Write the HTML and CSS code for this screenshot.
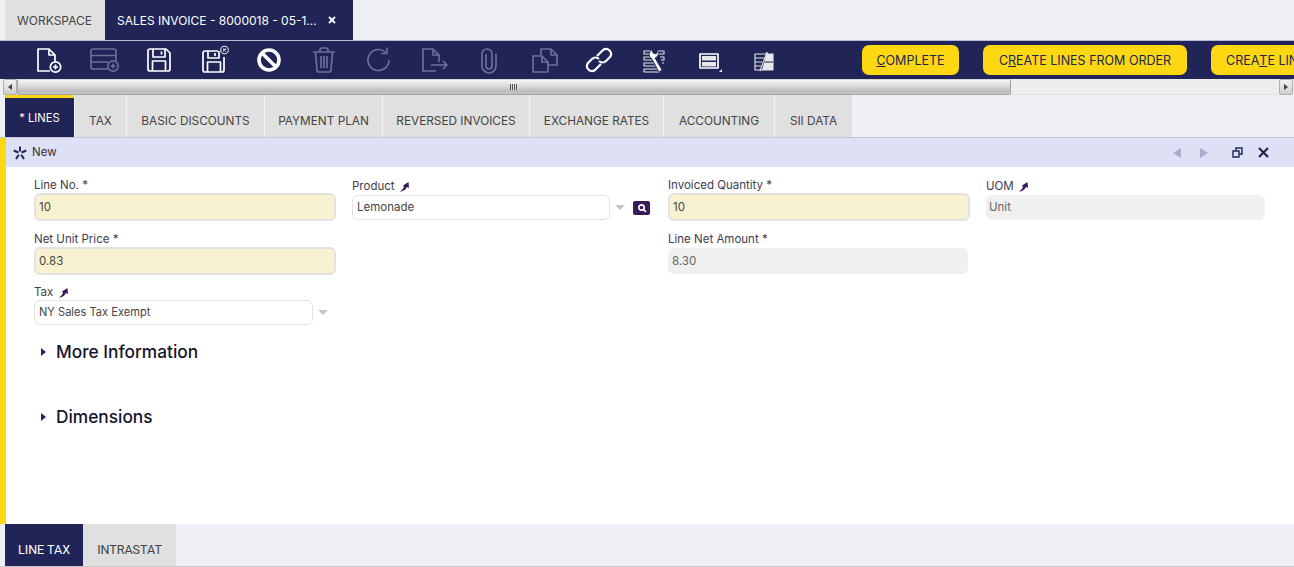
FILE: index.html
```html
<!DOCTYPE html>
<html>
<head>
    <title>Sales Invoice</title>
    <meta name="viewport" content="width=device-width, initial-scale=1.0">
    <link rel="stylesheet" href="styles.css">
</head>
<body>
    <!-- Window tabs -->
    <div class="window-tabs">
        <div class="window-tab">WORKSPACE</div>
        <div class="window-tab active">
            <span>SALES INVOICE - 8000018 - 05-1...</span>
            <svg class="tab-close" viewBox="0 0 8 8"><path d="M1 1l6 6M7 1l-6 6"/></svg>
        </div>
    </div>

    <!-- Toolbar -->
    <div class="toolbar">
        <div class="tool-icons">
            <div class="tool"><svg viewBox="0 0 32 32"><path d="M17 27H5V5h11l6 6v6M16 5v6h6"/><circle cx="22.5" cy="23" r="5.2"/><path d="M20 23h5M22.5 20.5v5"/></svg></div>
            <div class="tool off"><svg viewBox="0 0 32 32"><path d="M20 25H5a2 2 0 0 1-2-2V7a2 2 0 0 1 2-2h21a2 2 0 0 1 2 2v10M3 11.5h25M3 18h17"/><circle cx="25" cy="22" r="5.2"/><path d="M22.5 22h5M25 19.5v5"/></svg></div>
            <div class="tool"><svg viewBox="0 0 32 32"><path d="M7 5h16l4 4v16a2 2 0 0 1-2 2H7a2 2 0 0 1-2-2V7a2 2 0 0 1 2-2zM10 5v8h12V5M9.5 27V17h13v10M18.5 7.5v3"/></svg></div>
            <div class="tool"><svg viewBox="0 0 32 32"><path d="M20 7H7a2 2 0 0 0-2 2v17a2 2 0 0 0 2 2h17a2 2 0 0 0 2-2V13M10 7v7h11V7M9.5 28V18h13v10M17 9v3"/><circle cx="26.5" cy="6" r="3.8" class="thin"/><path class="thin" d="M25.2 4.700l2.600 2.600M27.800 4.700l-2.600 2.600"/></svg></div>
            <div class="tool"><svg viewBox="0 0 32 32"><circle class="thick" cx="16" cy="16" r="10"/><path class="thick" d="M9 9l14 14"/></svg></div>
            <div class="tool off"><svg viewBox="0 0 32 32"><path d="M5 8h22M12 8V6a2 2 0 0 1 2-2h4a2 2 0 0 1 2 2v2M7.500 8l1.500 18a2 2 0 0 0 2 2h10a2 2 0 0 0 2-2l1.500-18M13 12v12M16 12v12M19 12v12"/></svg></div>
            <div class="tool off"><svg viewBox="0 0 32 32"><path d="M26 16a10.500 10.500 0 1 1-3.500-7.800M24 3.500v6h-6"/></svg></div>
            <div class="tool off"><svg viewBox="0 0 32 32"><path d="M18 27H5V5h10l6 6v7M15 5v6h6M13 21h16M25 17l4 4-4 4"/></svg></div>
            <div class="tool off"><svg viewBox="0 0 32 32"><path d="M23 10v12a7 7 0 0 1-14 0V10a5 5 0 0 1 10 0v12a3 3 0 0 1-6 0V10"/></svg></div>
            <div class="tool off"><svg viewBox="0 0 32 32"><path d="M13 11V5h10l6 6v10h-9M23 5v6h6M5 12h9l6 6v10H5zM14 12v6h6"/></svg></div>
            <div class="tool"><svg viewBox="0 0 32 32"><path class="link" d="M14 12l2-2 4-4a5 5 0 0 1 7 7l-4 4a5 5 0 0 1-7 0M18 20l-6 6a5 5 0 0 1-7-7l4-4a5 5 0 0 1 7 0"/></svg></div>
            <div class="tool"><svg viewBox="0 0 32 32"><path class="thin" d="M6 7h8v3H6zM20 7h6v3h-6zM6 13h9v3H6zM22 13h4v3h-3M6 19h12v3H6zM6 25h15v3H6zM24 19h2"/><path class="wrench" d="M14 6l1 3 3 1 2-3a5 5 0 0 1-3 7l7 12-3 2-7-13a5 5 0 0 1 0-9z"/></svg></div>
            <div class="tool"><svg viewBox="0 0 32 32"><path d="M7 10h18v14H7z"/><path class="fill" d="M9 12h14v4.500H9zM9 18h14v4.500H9z"/><path class="fill" d="M29 28h-3l3-3z"/></svg></div>
            <div class="tool"><svg viewBox="0 0 32 32"><path class="thin" d="M7 10h18v16H7zM7 14h9M7 18h7M7 22h6"/><path class="fill" d="M19 8l1 2h5v16H14z"/><path class="dark" d="M16 18h9"/><path class="thin" d="M19 8L12 27"/></svg></div>
        </div>
        <div class="tool-buttons">
            <div class="action-btn complete"><u>C</u>OMPLETE</div>
            <div class="action-btn from-order">C<u>R</u>EATE LINES FROM ORDER</div>
            <div class="action-btn">CREA<u>T</u>E LINES FROM RECEIPT</div>
        </div>
    </div>

    <!-- Horizontal scroller -->
    <div class="scroller">
        <div class="scroll-btn"><span class="tri-left"></span></div>
        <div class="scroll-thumb"><span class="grip"></span></div>
        <div class="scroll-track"></div>
        <div class="scroll-btn"><span class="tri-right"></span></div>
    </div>

    <!-- Record tabs -->
    <div class="record-tabs">
        <div class="record-tab active">* LINES</div>
        <div class="record-tab">TAX</div>
        <div class="record-tab">BASIC DISCOUNTS</div>
        <div class="record-tab">PAYMENT PLAN</div>
        <div class="record-tab">REVERSED INVOICES</div>
        <div class="record-tab">EXCHANGE RATES</div>
        <div class="record-tab">ACCOUNTING</div>
        <div class="record-tab">SII DATA</div>
    </div>

    <div class="main">
        <div class="status-bar">
            <svg class="status-icon" viewBox="0 0 14 14"><path d="M7 .5v5M.8 4.500l4.700 2M13.200 4.500l-4.700 2M3 13l2.800-4.300M11 13L8.200 8.700"/></svg>
            <span class="status-text">New</span>
            <div class="status-actions">
                <span class="nav-left"></span>
                <span class="nav-right"></span>
                <svg class="restore" viewBox="0 0 11 11"><path d="M1 4h6v6H1zM4 4V1h6v6H7"/></svg>
                <svg class="close" viewBox="0 0 11 11"><path d="M1 1l9 9M10 1l-9 9"/></svg>
            </div>
        </div>

        <div class="form">
            <div class="grid">
                <div class="field">
                    <label>Line No. *</label>
                    <div class="input required">10</div>
                </div>
                <div class="field lookup">
                    <label>Product <svg class="pin" viewBox="0 0 11 11"><path d="M1 10.500C3 9.500 4 7.500 5 6L4 4.500 9.500 1 10 7 8 6c-1 2-3 4.500-7 4.500z"/></svg></label>
                    <div class="input-row">
                        <div class="input select wide">Lemonade</div>
                        <span class="caret"></span>
                        <span class="search-btn"><svg viewBox="0 0 12 10"><circle cx="5.500" cy="4.500" r="2.700"/><path d="M7.500 6.500l2.500 2.500"/></svg></span>
                    </div>
                </div>
                <div class="field">
                    <label>Invoiced Quantity *</label>
                    <div class="input required">10</div>
                </div>
                <div class="field lookup">
                    <label>UOM <svg class="pin" viewBox="0 0 11 11"><path d="M1 10.500C3 9.500 4 7.500 5 6L4 4.500 9.500 1 10 7 8 6c-1 2-3 4.500-7 4.500z"/></svg></label>
                    <div class="input readonly uom">Unit</div>
                </div>

                <div class="field second">
                    <label>Net Unit Price *</label>
                    <div class="input required">0.83</div>
                </div>
                <div></div>
                <div class="field second">
                    <label>Line Net Amount *</label>
                    <div class="input readonly amount">8.30</div>
                </div>
                <div></div>

                <div class="field third">
                    <label>Tax <svg class="pin" viewBox="0 0 11 11"><path d="M1 10.500C3 9.500 4 7.500 5 6L4 4.500 9.500 1 10 7 8 6c-1 2-3 4.500-7 4.500z"/></svg></label>
                    <div class="input-row">
                        <div class="input select tax">NY Sales Tax Exempt</div>
                        <span class="caret"></span>
                    </div>
                </div>
            </div>

            <div class="section first"><span class="section-arrow"></span>More Information</div>
            <div class="section"><span class="section-arrow"></span>Dimensions</div>
        </div>
    </div>

    <!-- Child tabs -->
    <div class="child-tabs">
        <div class="child-tab active">LINE TAX</div>
        <div class="child-tab">INTRASTAT</div>
    </div>
</body>
</html>
```

FILE: styles.css
```css
* {
    box-sizing: border-box;
}
html, body {
    height: 100%;
}
body {
    margin: 0;
    display: flex;
    flex-direction: column;
    height: 100vh;
    background: #eff0f5;
    color: #3a3a4a;
    font-family: 'Inter', sans-serif;
    font-size: 11.5px;
    overflow: hidden;
}

/* window tabs */
.window-tabs {
    display: flex;
    height: 40px;
    padding-left: 5px;
    flex: none;
}
.window-tab {
    display: flex;
    align-items: center;
    width: 100px;
    padding-left: 12px;
    background: #e0e0e0;
    font-size: 12px;
    color: #444;
    white-space: nowrap;
}
.window-tab.active {
    width: 248px;
    background: #202457;
    color: #fff;
}
.tab-close {
    width: 8px;
    height: 8px;
    margin-left: auto;
    margin-right: 17px;
    fill: none;
    stroke: #fff;
    stroke-width: 1.8;
}

/* toolbar */
.toolbar {
    display: flex;
    align-items: center;
    height: 39px;
    flex: none;
    padding-left: 21px;
    background: #202457;
    border-top: 1px solid #b9bad0;
    overflow: hidden;
}
.tool-icons {
    display: flex;
    flex: none;
    width: 841px;
}
.tool {
    display: flex;
    justify-content: center;
    width: 55px;
    flex: none;
}
.tool svg {
    width: 32px;
    height: 32px;
    fill: none;
    stroke: #fff;
    stroke-width: 1.7;
    stroke-linejoin: round;
}
.tool.off svg {
    stroke: #6c6f95;
}
.tool .thin {
    stroke: #e6e6e6;
    stroke-width: 1.1;
}
.tool .thick {
    stroke-width: 3.6;
}
.tool .link {
    stroke-width: 2.2;
}
.tool .wrench {
    fill: #fff;
    stroke: #202457;
    stroke-width: 0.8;
}
.tool .fill {
    fill: #e8e8e8;
    stroke: none;
}
.tool .dark {
    stroke: #202457;
    stroke-width: 1;
}
.tool-buttons {
    display: flex;
    gap: 24px;
    flex: none;
}
.action-btn {
    display: flex;
    align-items: center;
    justify-content: center;
    height: 30px;
    padding: 0 15px;
    border-radius: 7px;
    background: #fdd812;
    color: #202457;
    font-size: 12.5px;
    white-space: pre;
}
.action-btn.complete {
    width: 97px;
    padding: 0;
}
.action-btn.from-order {
    width: 204px;
    padding: 0;
}

/* scroller */
.scroller {
    display: flex;
    height: 16px;
    flex: none;
    padding: 0 1px 0 3px;
    background: #eff0f5;
}
.scroll-btn {
    display: flex;
    align-items: center;
    justify-content: center;
    width: 14px;
    flex: none;
    background: linear-gradient(#f2f2f2, #cfcfcf);
    border: 1px solid #b0b0b0;
    border-radius: 2px;
}
.tri-left {
    border: 3px solid transparent;
    border-left: 0;
    border-right: 4px solid #444;
}
.tri-right {
    border: 3px solid transparent;
    border-right: 0;
    border-left: 4px solid #444;
}
.scroll-thumb {
    display: flex;
    align-items: center;
    justify-content: center;
    width: 994px;
    flex: none;
    background: linear-gradient(#f3f3f3, #e2e2e2 35%, #bcbcbc 80%, #c6c6c6);
    border: 1px solid #a4a4a4;
    border-top-color: #d8d8d8;
    border-radius: 2px;
}
.grip {
    width: 8px;
    height: 6px;
    background: repeating-linear-gradient(90deg, #555 0 1px, #ddd 1px 2px);
}
.scroll-track {
    flex: 1;
    background: #eeeeee;
    border-bottom: 1px solid #e2e2e2;
}

/* record tabs */
.record-tabs {
    display: flex;
    height: 43px;
    flex: none;
    padding-left: 5px;
    border-bottom: 1px solid #c4c5dc;
}
.record-tab {
    display: flex;
    align-items: center;
    justify-content: center;
    padding-top: 10px;
    background: #e0e0e0;
    border-left: 1px solid #f4f4f4;
    font-size: 11.8px;
    color: #444;
    white-space: nowrap;
}
.record-tab:nth-child(2) { width: 52px; }
.record-tab:nth-child(3) { width: 138px; }
.record-tab:nth-child(4) { width: 118px; }
.record-tab:nth-child(5) { width: 147px; }
.record-tab:nth-child(6) { width: 134px; }
.record-tab:nth-child(7) { width: 111px; }
.record-tab:nth-child(8) { width: 78px; }
.record-tab.active {
    width: 69px;
    padding: 1px 0 0;
    border-left: 0;
    border-top: 3px solid #fdd812;
    background: #202457;
    color: #fff;
    font-size: 11.2px;
}

/* main panel */
.main {
    flex: 1;
    display: flex;
    flex-direction: column;
    background: #fff;
    border-left: 6px solid #fdd812;
    min-height: 0;
}
.status-bar {
    display: flex;
    align-items: center;
    height: 29px;
    flex: none;
    padding: 0 25px 0 7px;
    background: #dee0f5;
}
.status-icon {
    width: 14px;
    height: 14px;
    fill: none;
    stroke: #202457;
    stroke-width: 2;
}
.status-text {
    margin: 0 0 1px 5px;
    font-size: 11.5px;
    color: #333;
}
.status-actions {
    display: flex;
    align-items: center;
    margin-left: auto;
}
.nav-left {
    border: 5px solid transparent;
    border-left: 0;
    border-right: 8px solid #a9acd2;
}
.nav-right {
    margin-left: 19px;
    border: 5px solid transparent;
    border-right: 0;
    border-left: 8px solid #a9acd2;
}
.restore {
    width: 11px;
    height: 11px;
    margin-left: 24px;
    fill: none;
    stroke: #202457;
    stroke-width: 1.4;
}
.close {
    width: 11px;
    height: 11px;
    margin-left: 15px;
    fill: none;
    stroke: #202457;
    stroke-width: 2.2;
}

/* form */
.form {
    flex: 1;
    padding: 11px 0 0 28px;
}
.grid {
    display: grid;
    grid-template-columns: 318px 316px 318px 279px;
    grid-template-rows: 53px 54px auto;
}
.field {
    display: flex;
    flex-direction: column;
}
.field label {
    display: block;
    height: 14px;
    margin-bottom: 1px;
    line-height: 14px;
    font-size: 11.5px;
    color: #3d3d4d;
    white-space: nowrap;
}
.field.lookup {
    padding-top: 1px;
}
.field.lookup label {
    margin-bottom: 2px;
}
.field.second {
    padding-top: 1px;
}
.pin {
    width: 11px;
    height: 11px;
    margin-left: 1px;
    vertical-align: -2px;
    fill: #3b1a5c;
}
.input {
    display: flex;
    align-items: center;
    width: 302px;
    height: 25px;
    padding-left: 4px;
    border: 1px solid #e2e2e2;
    border-radius: 6px;
    background: #fff;
    font-size: 11.5px;
    color: #444;
}
.input.select,
.input.uom {
    padding-bottom: 1px;
}
.input.required {
    height: 28px;
    padding: 0 0 0 3px;
    background: #f9f2d0;
    border: 2px solid #e2e2e2;
}
.input.readonly {
    padding-left: 2px;
    background: #f0f0f0;
    border-color: #f0f0f0;
    color: #666;
}
.input.uom {
    width: 279px;
}
.input.amount {
    width: 300px;
    height: 26px;
    margin-top: 1px;
    padding-left: 3px;
}
.input-row {
    display: flex;
    align-items: center;
}
.input.wide {
    width: 258px;
}
.input.tax {
    width: 279px;
    font-size: 11.1px;
}
.caret {
    margin-left: 5px;
    border: 5px solid transparent;
    border-bottom: 0;
    border-top: 5px solid #c4c4c4;
}
.search-btn {
    display: flex;
    align-items: center;
    justify-content: center;
    width: 17px;
    height: 14px;
    margin-left: 8px;
    border-radius: 2px;
    background: #3b1a5c;
}
.search-btn svg {
    width: 12px;
    height: 10px;
    fill: none;
    stroke: #fff;
    stroke-width: 1.7;
}

/* collapsed sections */
.section {
    display: flex;
    align-items: center;
    height: 24px;
    margin-top: 41px;
    font-size: 17.3px;
    font-weight: 500;
    color: #15152a;
}
.section.first {
    margin-top: 14px;
}
.section-arrow {
    margin: 2px 10px 0 7px;
    border: 4px solid transparent;
    border-right: 0;
    border-left: 5px solid #3b1a5c;
}

/* child tabs */
.child-tabs {
    display: flex;
    height: 43px;
    flex: none;
    padding-left: 5px;
    border-bottom: 1px solid #c8c8c8;
}
.child-tab {
    display: flex;
    align-items: center;
    justify-content: center;
    width: 93px;
    padding-top: 8px;
    background: #e0e0e0;
    font-family: 'Roboto', sans-serif;
    font-size: 12.5px;
    color: #444;
    white-space: nowrap;
}
.child-tab.active {
    width: 78px;
    background: #202457;
    color: #fff;
}
```
